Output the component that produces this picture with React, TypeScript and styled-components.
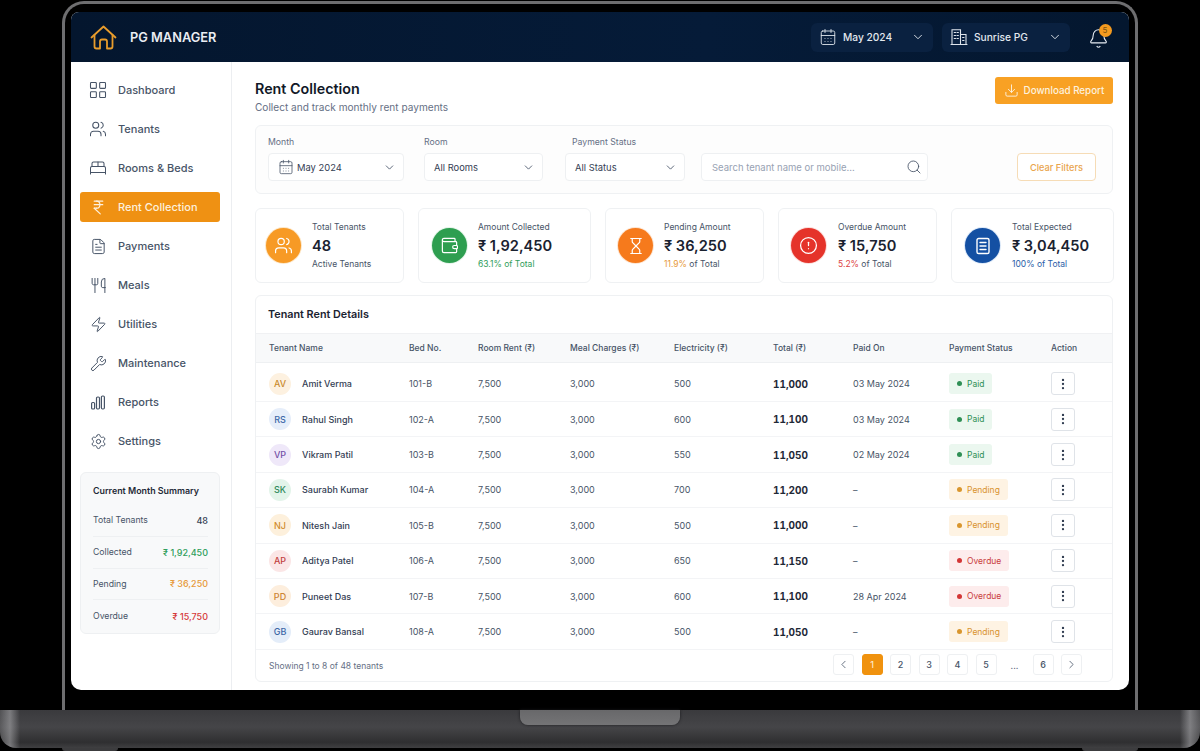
import React from 'react';
import styled, { createGlobalStyle } from 'styled-components';
import {
	Bell,
	BedDouble,
	CalendarDays,
	ChevronDown,
	ChevronLeft,
	ChevronRight,
	CircleAlert,
	Download,
	EllipsisVertical,
	FileText,
	Hourglass,
	IndianRupee,
	LayoutGrid,
	Search,
	Settings,
	Users,
	Utensils,
	Wallet,
	Wrench,
	Zap,
} from 'lucide-react';

const GlobalStyle = createGlobalStyle`
	html, body {
		margin: 0;
		background: #000;
		font-family: Inter, "Noto Sans", sans-serif;
		overflow: hidden;
	}
	* { box-sizing: border-box; }
`;

const HouseLogo = () => (
	<svg width='27' height='25' viewBox='0 0 27 25' fill='none' stroke='#e89c2c' strokeWidth='1.8' strokeLinejoin='round' strokeLinecap='round'>
		<path d='M1.5 12.5 L13.5 1.5 L25.5 12.5' />
		<path d='M4.5 10 V21.5 a2 2 0 0 0 2 2 H10 V16.5 a2 2 0 0 1 2 -2 H15 a2 2 0 0 1 2 2 V23.5 H20.5 a2 2 0 0 0 2 -2 V10' />
	</svg>
);

const BarsIcon = () => (
	<svg width='20' height='20' viewBox='0 0 20 20' fill='none' stroke='#475467' strokeWidth='1.2'>
		<rect x='3.6' y='10.5' width='3' height='6.5' rx='1' />
		<rect x='8.5' y='5' width='3' height='12' rx='1.2' />
		<rect x='13.4' y='4' width='3' height='13' rx='1.2' />
	</svg>
);

const DocIcon = () => (
	<svg width='18' height='18' viewBox='0 0 18 18' fill='none' stroke='#fff' strokeWidth='1.4' strokeLinecap='round'>
		<rect x='3' y='1.5' width='12' height='15' rx='1.6' />
		<path d='M6 5.5h6M6 9h6M6 12.5h6' />
	</svg>
);

const TowerIcon = () => (
	<svg width='18' height='18' viewBox='0 0 18 18' fill='none' stroke='#dfe5ec' strokeWidth='1.1' strokeLinecap='round'>
		<path d='M2 1.8h8.5v14.7H2z' />
		<path d='M10.5 6.5H16v10h-5.5' />
		<path d='M1 16.5h16' />
		<path d='M4.2 4.5h1.4M7 4.5h1.4M4.2 7.5h1.4M7 7.5h1.4M4.2 10.5h1.4M7 10.5h1.4M12.6 9.5h1.4M12.6 12.5h1.4' />
	</svg>
);

const navItems = [
	{ label: 'Dashboard', icon: <LayoutGrid size={20} strokeWidth={1.3} /> },
	{ label: 'Tenants', icon: <Users size={18} strokeWidth={1.4} /> },
	{ label: 'Rooms & Beds', icon: <BedDouble size={18} strokeWidth={1.4} /> },
	{ label: 'Rent Collection', icon: <IndianRupee size={17} strokeWidth={1.7} />, active: true },
	{ label: 'Payments', icon: <FileText size={17} strokeWidth={1.4} /> },
	{ label: 'Meals', icon: <Utensils size={17} strokeWidth={1.4} /> },
	{ label: 'Utilities', icon: <Zap size={17} strokeWidth={1.4} /> },
	{ label: 'Maintenance', icon: <Wrench size={17} strokeWidth={1.4} /> },
	{ label: 'Reports', icon: <BarsIcon /> },
	{ label: 'Settings', icon: <Settings size={17} strokeWidth={1.4} /> },
];

const summaryRows = [
	{ label: 'Total Tenants', value: '48', color: '#344054' },
	{ label: 'Collected', value: '₹ 1,92,450', color: '#2f9e5b' },
	{ label: 'Pending', value: '₹ 36,250', color: '#e79a3a' },
	{ label: 'Overdue', value: '₹ 15,750', color: '#d63b3b' },
];

const stats = [
	{ label: 'Total Tenants', value: '48', note: 'Active Tenants', accent: '', noteColor: '#475467', bg: '#f79a25', glow: '#fde7c8', pad: 10, gap: 11, icon: <Users size={19} strokeWidth={1.5} /> },
	{ label: 'Amount Collected', value: '₹ 1,92,450', note: '', accent: '63.1% of Total', noteColor: '#2f9e5b', bg: '#2e9e50', glow: '#e3f4e8', pad: 13, gap: 11, icon: <Wallet size={19} strokeWidth={1.5} /> },
	{ label: 'Pending Amount', value: '₹ 36,250', note: ' of Total', accent: '11.9%', noteColor: '#e79a3a', bg: '#f67a1c', glow: '#fde4d0', pad: 12, gap: 11, icon: <Hourglass size={18} strokeWidth={1.6} /> },
	{ label: 'Overdue Amount', value: '₹ 15,750', note: ' of Total', accent: '5.2%', noteColor: '#dc3f3f', bg: '#e5332a', glow: '#fcdcd9', pad: 12, gap: 12, icon: <CircleAlert size={19} strokeWidth={1.6} /> },
	{ label: 'Total Expected', value: '₹ 3,04,450', note: '', accent: '100% of Total', noteColor: '#2a5ea8', bg: '#1450a3', glow: '#dbe8f8', pad: 13, gap: 12, icon: <DocIcon /> },
];

const columns = ['Tenant Name', 'Bed No.', 'Room Rent (₹)', 'Meal Charges (₹)', 'Electricity (₹)', 'Total (₹)', 'Paid On', 'Payment Status', 'Action'];

type Status = 'Paid' | 'Pending' | 'Overdue';

const tenants: { initials: string; name: string; bed: string; meter: string; total: string; paidOn: string; status: Status; tint: string; ink: string }[] = [
	{ initials: 'AV', name: 'Amit Verma', bed: '101-B', meter: '500', total: '11,000', paidOn: '03 May 2024', status: 'Paid', tint: '#fdf1e0', ink: '#c98a2c' },
	{ initials: 'RS', name: 'Rahul Singh', bed: '102-A', meter: '600', total: '11,100', paidOn: '03 May 2024', status: 'Paid', tint: '#e6eefa', ink: '#3e68a8' },
	{ initials: 'VP', name: 'Vikram Patil', bed: '103-B', meter: '550', total: '11,050', paidOn: '02 May 2024', status: 'Paid', tint: '#efe8f9', ink: '#7450a8' },
	{ initials: 'SK', name: 'Saurabh Kumar', bed: '104-A', meter: '700', total: '11,200', paidOn: '–', status: 'Pending', tint: '#e3f4ea', ink: '#2f8a5b' },
	{ initials: 'NJ', name: 'Nitesh Jain', bed: '105-B', meter: '500', total: '11,000', paidOn: '–', status: 'Pending', tint: '#fdf0dc', ink: '#d08a2a' },
	{ initials: 'AP', name: 'Aditya Patel', bed: '106-A', meter: '650', total: '11,150', paidOn: '–', status: 'Overdue', tint: '#fbe6e6', ink: '#c2413f' },
	{ initials: 'PD', name: 'Puneet Das', bed: '107-B', meter: '600', total: '11,100', paidOn: '28 Apr 2024', status: 'Overdue', tint: '#fdeedd', ink: '#cd8433' },
	{ initials: 'GB', name: 'Gaurav Bansal', bed: '108-A', meter: '500', total: '11,050', paidOn: '–', status: 'Pending', tint: '#e4edf9', ink: '#3a65a5' },
];

const statusTheme: Record<Status, { bg: string; ink: string; dot: string }> = {
	Paid: { bg: '#ebf7ef', ink: '#2f8f55', dot: '#2f8f55' },
	Pending: { bg: '#fef3e3', ink: '#d9922e', dot: '#d9962e' },
	Overdue: { bg: '#fdecec', ink: '#c93d3d', dot: '#d33636' },
};

const App = () => {
	return (
		<Stage>
			<GlobalStyle />
			<Lid>
				<Screen>
					<TopBar>
						<HouseLogo />
						<Brand>PG MANAGER</Brand>
						<Selector $width={122}>
							<CalendarDays size={18} strokeWidth={1.2} />
							<SelectorText>May 2024</SelectorText>
							<ChevronDown size={14} strokeWidth={1.6} />
						</Selector>
						<Selector $width={128}>
							<TowerIcon />
							<SelectorText>Sunrise PG</SelectorText>
							<ChevronDown size={14} strokeWidth={1.6} />
						</Selector>
						<BellWrap>
							<Bell size={21} strokeWidth={1.25} />
							<BellBadge>5</BellBadge>
						</BellWrap>
					</TopBar>
					<Body>
						<Sidebar>
							<NavList>
								{navItems.map((item) => (
									<NavItem key={item.label} $active={!!item.active}>
										<NavIcon>{item.icon}</NavIcon>
										<span>{item.label}</span>
									</NavItem>
								))}
							</NavList>
							<SummaryCard>
								<SummaryTitle>Current Month Summary</SummaryTitle>
								{summaryRows.map((row) => (
									<SummaryRow key={row.label}>
										<span>{row.label}</span>
										<SummaryValue $color={row.color}>{row.value}</SummaryValue>
									</SummaryRow>
								))}
							</SummaryCard>
						</Sidebar>
						<Main>
							<PageHead>
								<div>
									<PageTitle>Rent Collection</PageTitle>
									<PageSub>Collect and track monthly rent payments</PageSub>
								</div>
								<DownloadButton>
									<Download size={15} strokeWidth={1.5} />
									Download Report
								</DownloadButton>
							</PageHead>

							<FilterCard>
								<Field $width={136} $after={20}>
									<FieldLabel>Month</FieldLabel>
									<SelectBox>
										<CalendarDays size={16} strokeWidth={1.2} />
										<SelectText>May 2024</SelectText>
										<ChevronDown size={13} strokeWidth={1.6} />
									</SelectBox>
								</Field>
								<Field $width={119} $after={22}>
									<FieldLabel>Room</FieldLabel>
									<SelectBox>
										<SelectText>All Rooms</SelectText>
										<ChevronDown size={13} strokeWidth={1.6} />
									</SelectBox>
								</Field>
								<Field $width={120} $after={16}>
									<FieldLabel $indent={7}>Payment Status</FieldLabel>
									<SelectBox>
										<SelectText>All Status</SelectText>
										<ChevronDown size={13} strokeWidth={1.6} />
									</SelectBox>
								</Field>
								<SearchBox>
									<SearchHint>Search tenant name or mobile...</SearchHint>
									<Search size={16} strokeWidth={1.3} />
								</SearchBox>
								<ClearButton>Clear Filters</ClearButton>
							</FilterCard>

							<StatGrid>
								{stats.map((s) => (
									<StatCard key={s.label} $pad={s.pad} $gap={s.gap}>
										<StatIcon $bg={s.bg} $glow={s.glow}>{s.icon}</StatIcon>
										<div>
											<StatLabel>{s.label}</StatLabel>
											<StatValue>{s.value}</StatValue>
											<StatNote>
												<NoteAccent $color={s.noteColor}>{s.accent}</NoteAccent>
												{s.note}
											</StatNote>
										</div>
									</StatCard>
								))}
							</StatGrid>

							<TableCard>
								<TableTitle>Tenant Rent Details</TableTitle>
								<HeadRow>
									{columns.map((c) => (
										<span key={c}>{c}</span>
									))}
								</HeadRow>
								{tenants.map((t, i) => (
									<DataRow key={t.initials} $first={i === 0}>
										<NameCell>
											<Avatar $tint={t.tint} $ink={t.ink}>{t.initials}</Avatar>
											{t.name}
										</NameCell>
										<span>{t.bed}</span>
										<span>7,500</span>
										<span>3,000</span>
										<span>{t.meter}</span>
										<TotalCell>{t.total}</TotalCell>
										<span>{t.paidOn}</span>
										<span>
											<StatusPill $status={t.status}>{t.status}</StatusPill>
										</span>
										<ActionButton>
											<EllipsisVertical size={14} strokeWidth={2} />
										</ActionButton>
									</DataRow>
								))}
								<TableFooter>
									<span>Showing 1 to 8 of 48 tenants</span>
									<Pager>
										<PageButton><ChevronLeft size={13} strokeWidth={1.5} /></PageButton>
										<PageButton $current>1</PageButton>
										<PageButton>2</PageButton>
										<PageButton>3</PageButton>
										<PageButton>4</PageButton>
										<PageButton>5</PageButton>
										<PageGap>...</PageGap>
										<PageButton>6</PageButton>
										<PageButton><ChevronRight size={13} strokeWidth={1.5} /></PageButton>
									</Pager>
								</TableFooter>
							</TableCard>
						</Main>
					</Body>
				</Screen>
			</Lid>
			<Base>
				<Notch />
			</Base>
			<Feet>
				<Foot />
				<Foot />
			</Feet>
		</Stage>
	);
};

const Stage = styled.div`
	width: 1200px;
	height: 751px;
	background: #000;
	padding-top: 1px;
	display: flex;
	flex-direction: column;
	align-items: center;
	overflow: hidden;
`;

const Lid = styled.div`
	width: 1076px;
	height: 709px;
	flex: none;
	background: #000;
	border: 3px solid #6e6e70;
	border-bottom: 0;
	border-radius: 22px 22px 0 0;
	padding: 8px 6px 0;
`;

const Screen = styled.div`
	width: 1058px;
	height: 678px;
	background: #fff;
	border-radius: 8px 8px 10px 10px;
	overflow: hidden;
	display: flex;
	flex-direction: column;
`;

const TopBar = styled.header`
	height: 50px;
	flex: none;
	background: linear-gradient(90deg, #04162e, #051b38 60%, #04172f);
	display: flex;
	align-items: center;
	gap: 9px;
	padding: 0 20.5px 0 19px;
	color: #e6ebf2;
`;

const Brand = styled.div`
	font-size: 12.8px;
	font-weight: 600;
	color: #e9edf3;
	margin-left: 4px;
	margin-right: auto;
`;

const Selector = styled.div<{ $width: number }>`
	width: ${(p) => p.$width}px;
	height: 29px;
	background: #0a2140;
	border-radius: 6px;
	display: flex;
	align-items: center;
	gap: 6px;
	padding: 0 8px;
	svg { flex: none; color: #dfe5ec; }
`;

const SelectorText = styled.span`
	flex: 1;
	font-size: 10.2px;
	font-weight: 500;
	color: #e3e8ef;
`;

const BellWrap = styled.div`
	position: relative;
	display: flex;
	margin: 2px 0 0 8.5px;
	color: #e6ebf2;
`;

const BellBadge = styled.span`
	position: absolute;
	top: -4px;
	right: -3px;
	width: 13px;
	height: 13px;
	border-radius: 50%;
	background: #f39a1f;
	color: #7a5210;
	font-size: 8px;
	line-height: 13px;
	text-align: center;
`;

const Body = styled.div`
	flex: 1;
	display: flex;
	min-height: 0;
`;

const Sidebar = styled.aside`
	width: 161px;
	flex: none;
	border-right: 1px solid #eceef1;
	padding: 13px 11px 0 9px;
`;

const NavList = styled.nav`
	display: flex;
	flex-direction: column;
	gap: 9px;
`;

const NavItem = styled.div<{ $active: boolean }>`
	height: 30px;
	border-radius: 3px;
	display: flex;
	align-items: center;
	gap: 10px;
	padding-left: 8px;
	font-size: 11px;
	font-weight: 500;
	color: ${(p) => (p.$active ? '#fdf0dd' : '#475467')};
	background: ${(p) => (p.$active ? '#ef9113' : 'transparent')};
`;

const NavIcon = styled.span`
	width: 20px;
	height: 20px;
	flex: none;
	display: flex;
	align-items: center;
	justify-content: center;
`;

const SummaryCard = styled.section`
	margin-top: 16px;
	height: 162px;
	background: #f8f9fa;
	border: 1px solid #eef0f2;
	border-radius: 6px;
	padding: 12px 11px 0 12px;
`;

const SummaryTitle = styled.div`
	font-size: 8.9px;
	line-height: 11px;
	font-weight: 600;
	color: #1f2937;
	margin-bottom: 9px;
`;

const SummaryRow = styled.div`
	height: 31.8px;
	display: flex;
	align-items: center;
	justify-content: space-between;
	font-size: 8.7px;
	color: #475467;
	border-bottom: 1px solid #eef0f2;
	&:last-child { border-bottom: 0; }
`;

const SummaryValue = styled.span<{ $color: string }>`
	color: ${(p) => p.$color};
	font-weight: 500;
	font-size: 9px;
`;

const Main = styled.main`
	flex: 1;
	min-width: 0;
	padding: 15px 16px 0 23px;
`;

const PageHead = styled.div`
	display: flex;
	justify-content: space-between;
	align-items: flex-start;
	height: 48px;
`;

const PageTitle = styled.h1`
	margin: 1px 0 0;
	font-size: 14.3px;
	line-height: 21px;
	font-weight: 600;
	color: #111827;
`;

const PageSub = styled.p`
	margin: 1px 0 0;
	font-size: 10.1px;
	line-height: 14px;
	color: #667085;
`;

const DownloadButton = styled.button`
	width: 118px;
	height: 27px;
	border: 0;
	border-radius: 3px;
	background: #f8a124;
	color: #fdf1df;
	font: 500 9.8px Inter, sans-serif;
	display: flex;
	align-items: center;
	justify-content: center;
	gap: 5px;
	padding: 0;
`;

const FilterCard = styled.section`
	height: 69px;
	border: 1px solid #eff1f3;
	border-radius: 6px;
	background: #fdfdfd;
	padding: 10px 16px 12px 12px;
	display: flex;
	align-items: flex-end;
`;

const Field = styled.div<{ $width: number; $after: number }>`
	width: ${(p) => p.$width}px;
	margin-right: ${(p) => p.$after}px;
	flex: none;
`;

const FieldLabel = styled.div<{ $indent?: number }>`
	font-size: 8.7px;
	line-height: 12px;
	color: #667085;
	margin: 0 0 5px ${(p) => p.$indent ?? 0}px;
`;

const SelectBox = styled.div`
	height: 28px;
	background: #fff;
	border: 1px solid #eef0f2;
	border-radius: 4px;
	padding: 0 7px 0 9px;
	display: flex;
	align-items: center;
	gap: 3px;
	color: #475467;
	svg { flex: none; }
`;

const SelectText = styled.span`
	flex: 1;
	font-size: 9.4px;
	color: #344054;
`;

const SearchBox = styled.div`
	width: 227px;
	height: 28px;
	flex: none;
	background: #fff;
	border: 1px solid #eef0f2;
	border-radius: 4px;
	padding: 0 5px 0 10px;
	display: flex;
	align-items: center;
	justify-content: space-between;
	color: #475467;
`;

const SearchHint = styled.span`
	font-size: 9.5px;
	color: #98a2b3;
`;

const ClearButton = styled.button`
	width: 79px;
	height: 28px;
	margin-left: auto;
	background: #fff;
	border: 1px solid #f6dcb6;
	border-radius: 4px;
	color: #e9a44c;
	font: 500 9.2px Inter, sans-serif;
	padding: 0;
`;

const StatGrid = styled.div`
	display: grid;
	grid-template-columns: 149px 173px 159px 159px 163px;
	column-gap: 14px;
	margin-top: 14px;
`;

const StatCard = styled.div<{ $pad: number; $gap: number }>`
	height: 75px;
	border: 1px solid #eff1f3;
	border-radius: 6px;
	display: flex;
	align-items: center;
	gap: ${(p) => p.$gap}px;
	padding-left: ${(p) => p.$pad}px;
`;

const StatIcon = styled.div<{ $bg: string; $glow: string }>`
	width: 35px;
	height: 35px;
	flex: none;
	border-radius: 50%;
	background: ${(p) => p.$bg};
	box-shadow: 0 0 0 1px ${(p) => p.$glow};
	color: #fff;
	display: flex;
	align-items: center;
	justify-content: center;
`;

const StatLabel = styled.div`
	font-size: 8.5px;
	line-height: 12px;
	color: #475467;
`;

const StatValue = styled.div`
	font-size: 14.6px;
	line-height: 20px;
	margin: 3px 0 2px;
	font-weight: 600;
	color: #1a2230;
`;

const StatNote = styled.div`
	font-size: 8.5px;
	line-height: 12px;
	color: #475467;
`;

const NoteAccent = styled.span<{ $color: string }>`
	color: ${(p) => p.$color};
`;

const TableCard = styled.section`
	margin-top: 12px;
	height: 387px;
	border: 1px solid #eff1f3;
	border-radius: 6px;
	overflow: hidden;
`;

const TableTitle = styled.h2`
	margin: 0;
	height: 37px;
	padding: 12px 12px 0;
	font-size: 10.8px;
	line-height: 14px;
	font-weight: 600;
	color: #1a2230;
`;

const gridColumns = '153px 69px 92px 104px 99px 80px 96px 102px 1fr';

const HeadRow = styled.div`
	height: 30px;
	background: #f8f9fa;
	border-top: 1px solid #f0f1f3;
	border-bottom: 1px solid #eef0f2;
	display: grid;
	grid-template-columns: ${gridColumns};
	align-items: center;
	font-size: 8.5px;
	color: #475467;
	font-weight: 500;
	span:first-child { padding-left: 13px; }
`;

const DataRow = styled.div<{ $first: boolean }>`
	height: ${(p) => (p.$first ? 39 : 35.4)}px;
	padding-top: ${(p) => (p.$first ? 3 : 0)}px;
	display: grid;
	grid-template-columns: ${gridColumns};
	align-items: center;
	font-size: 9px;
	color: #475467;
	border-bottom: 1px solid #f3f4f6;
`;

const NameCell = styled.div`
	display: flex;
	align-items: center;
	gap: 11px;
	padding-left: 13px;
	color: #344054;
	font-weight: 500;
`;

const Avatar = styled.span<{ $tint: string; $ink: string }>`
	width: 22px;
	height: 22px;
	border-radius: 50%;
	background: ${(p) => p.$tint};
	color: ${(p) => p.$ink};
	font-size: 9px;
	display: flex;
	align-items: center;
	justify-content: center;
`;

const TotalCell = styled.span`
	font-size: 10px;
	font-weight: 700;
	color: #1f2937;
	font-variant-numeric: tabular-nums;
`;

const StatusPill = styled.span<{ $status: Status }>`
	display: inline-flex;
	align-items: center;
	gap: 5px;
	height: 21px;
	padding: 0 8px;
	border-radius: 3px;
	font-size: 8.5px;
	background: ${(p) => statusTheme[p.$status].bg};
	color: ${(p) => statusTheme[p.$status].ink};
	&::before {
		content: '';
		width: 5px;
		height: 5px;
		border-radius: 50%;
		background: ${(p) => statusTheme[p.$status].dot};
	}
`;

const ActionButton = styled.div`
	width: 24px;
	height: 23px;
	border: 1px solid #dfe3e8;
	border-radius: 3px;
	display: flex;
	align-items: center;
	justify-content: center;
	color: #344054;
`;

const TableFooter = styled.div`
	height: 33.3px;
	display: flex;
	align-items: center;
	justify-content: space-between;
	padding: 0 30px 0 13px;
	font-size: 8.5px;
	color: #667085;
`;

const Pager = styled.div`
	display: flex;
	gap: 7.5px;
`;

const PageButton = styled.div<{ $current?: boolean }>`
	width: 21px;
	height: 21px;
	border: 1px solid ${(p) => (p.$current ? '#f0920e' : '#eef0f2')};
	border-radius: 3px;
	background: ${(p) => (p.$current ? '#f0920e' : '#fff')};
	color: ${(p) => (p.$current ? '#fde7c8' : '#475467')};
	font-size: 9px;
	font-weight: 500;
	display: flex;
	align-items: center;
	justify-content: center;
`;

const PageGap = styled.div`
	width: 21px;
	font-size: 9px;
	color: #667085;
	text-align: center;
	line-height: 24px;
`;

const Base = styled.div`
	width: 1200px;
	height: 38px;
	flex: none;
	border-radius: 0 0 16px 16px;
	background:
		linear-gradient(90deg, rgba(150, 150, 152, 0.25) 0, rgba(175, 175, 178, 0.55) 10px, transparent 20px, transparent 1180px, rgba(175, 175, 178, 0.55) 1190px, rgba(150, 150, 152, 0.25) 100%),
		linear-gradient(180deg, #3a3a3d 0, #454548 45%, #2f2f31 85%, #3f3f41 100%);
	display: flex;
	justify-content: center;
`;

const Notch = styled.div`
	width: 160px;
	height: 15px;
	border-radius: 0 0 8px 8px;
	background: linear-gradient(180deg, #68686a, #747476);
	box-shadow: 0 0 3px #1c1c1e;
`;

const Feet = styled.div`
	width: 1076px;
	flex: none;
	display: flex;
	justify-content: space-between;
`;

const Foot = styled.div`
	width: 56px;
	height: 3px;
	border-radius: 0 0 4px 4px;
	background: #3c3c3e;
`;

export default App;
